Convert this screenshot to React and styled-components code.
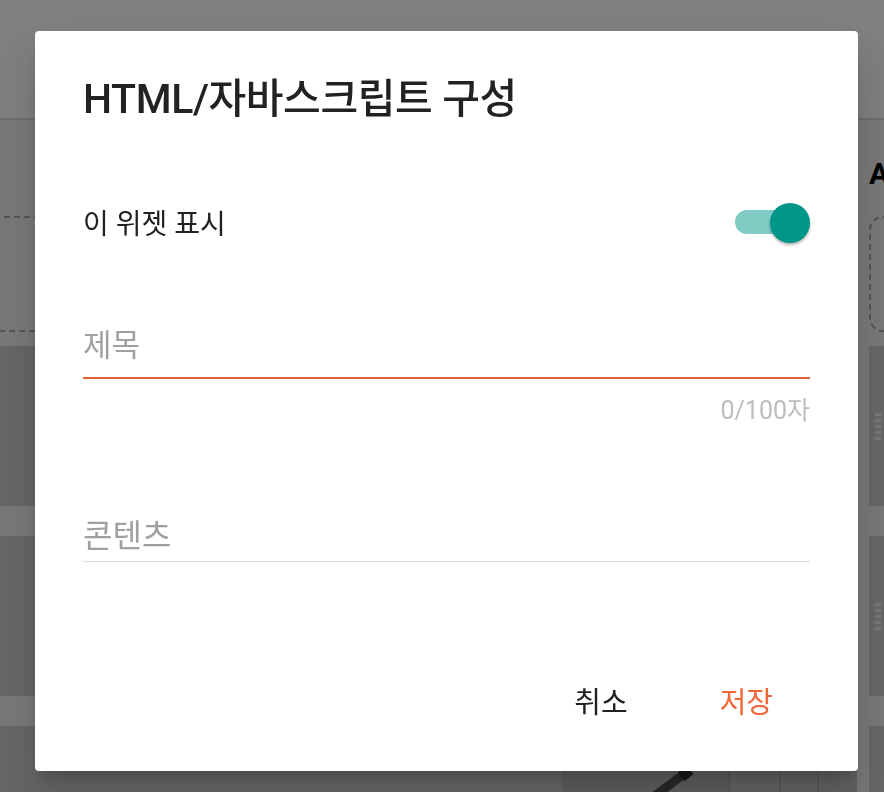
import React from 'react';
import styled, { createGlobalStyle } from 'styled-components';

const GlobalStyle = createGlobalStyle`
  html, body {
    margin: 0;
    padding: 0;
    height: 100%;
    overflow: hidden;
    background: #f0f0f0;
    font-family: Roboto, "Noto Sans CJK KR", sans-serif;
  }
`;

// page behind the dialog
const Page = styled.div`
  width: 884px;
  height: 792px;
  background: #f0f0f0;
  overflow: hidden;
`;

const Header = styled.header`
  height: 118px;
  background: #ffffff;
  border-bottom: 2px solid #d8d8d8;
`;

const Columns = styled.div`
  display: flex;
  gap: 12px;
  margin-left: -40px;
`;

const Column = styled.section`
  flex: 0 0 ${props => props.width}px;
  display: flex;
  flex-direction: column;
  gap: 30px;
  padding-top: 40px;
`;

const ColumnTitle = styled.h2`
  margin: 0 0 -2px;
  height: 28px;
  font-size: 30px;
  line-height: 28px;
  font-weight: 700;
  color: #000;
  white-space: nowrap;
`;

const DropZone = styled.div`
  height: 112px;
  border: 2px dashed #aaaaaa;
  border-radius: 14px;
  margin-bottom: -16px;
`;

const WidgetCard = styled.div`
  height: 160px;
  background: #cdcdcd;
  display: flex;
  align-items: ${props => (props.tools ? 'stretch' : 'center')};
  padding-left: 6px;
`;

const Grip = styled.div`
  display: flex;
  flex-direction: column;
  justify-content: center;
  gap: 3px;
  span {
    width: 6px;
    height: 3px;
    background: #ffffff;
    opacity: 0.7;
  }
`;

const ToolCells = styled.div`
  margin-left: auto;
  display: flex;
  align-items: stretch;
  background: #bcbcbc;
`;

const ToolCell = styled.div`
  width: ${props => props.w}px;
  border-left: 2px solid #b0b0b0;
  background: #c2c2c2;
`;

const Overlay = styled.div`
  position: fixed;
  inset: 0;
  background: rgba(0, 0, 0, 0.5);
  display: flex;
  align-items: flex-start;
  padding: 31px 0 0 35px;
`;

const Dialog = styled.div`
  width: 823px;
  height: 740px;
  box-sizing: border-box;
  background: #ffffff;
  border-radius: 4px;
  box-shadow: 0 11px 15px -7px rgba(0, 0, 0, 0.2), 0 24px 38px 3px rgba(0, 0, 0, 0.14);
  padding: 44px 48px 0;
  display: flex;
  flex-direction: column;
`;

const Title = styled.h1`
  margin: 0;
  font-size: 41px;
  line-height: 48px;
  font-weight: 500;
  color: #222222;
  letter-spacing: -0.4px;
`;

const ToggleRow = styled.div`
  margin-top: 74px;
  height: 50px;
  display: flex;
  align-items: center;
  justify-content: space-between;
`;

const Label = styled.span`
  font-size: 28px;
  color: #222222;
`;

const Switch = styled.div`
  position: relative;
  width: 66px;
  height: 24px;
  margin-right: 9px;
  border-radius: 12px;
  background: ${props => (props.on ? '#80cbc4' : '#bdbdbd')};
`;

const Thumb = styled.span`
  position: absolute;
  top: -7px;
  right: -9px;
  width: 40px;
  height: 40px;
  border-radius: 50%;
  background: #009688;
  box-shadow: 0 2px 3px rgba(0, 0, 0, 0.3);
`;

const Field = styled.div`
  margin-top: ${props => props.top}px;
  padding-bottom: ${props => props.pad}px;
  display: flex;
  align-items: flex-end;
  border-bottom: ${props => (props.focused ? '2px solid #e0622f' : '1px solid #dcdcdc')};
`;

const Placeholder = styled.span`
  font-size: ${props => props.size}px;
  line-height: 40px;
  color: #a0a0a0;
`;

const Counter = styled.div`
  margin-top: 18px;
  text-align: right;
  font-size: 25px;
  line-height: 28px;
  color: #bdbdbd;
`;

const Actions = styled.div`
  margin-top: auto;
  height: 100px;
  display: flex;
  justify-content: flex-end;
  align-items: flex-start;
  gap: 92px;
  padding-right: 37px;
  box-sizing: border-box;
`;

const TextButton = styled.button`
  border: none;
  background: none;
  padding: 0;
  margin-top: 12px;
  font-family: inherit;
  font-size: 29px;
  line-height: 40px;
  color: ${props => (props.primary ? '#f0683a' : '#222222')};
`;

function Card({ tools }) {
  return (
    <WidgetCard tools={tools}>
      <Grip>
        {[0, 1, 2, 3, 4].map(i => <span key={i} />)}
      </Grip>
      {tools && (
        <ToolCells>
          <svg width="166" height="160" viewBox="0 0 166 160">
            <path d="M90 72 L122 48" stroke="#505050" strokeWidth="9" />
            <path d="M119 51 L128 44" stroke="#2e2e2e" strokeWidth="11" />
          </svg>
          <ToolCell w={49} />
          <ToolCell w={36} />
          <ToolCell w={38} />
        </ToolCells>
      )}
    </WidgetCard>
  );
}

export default function App() {
  return (
    <>
      <GlobalStyle />
      <Page>
        <Header />
        <Columns>
          <Column width={897}>
            <ColumnTitle>&nbsp;</ColumnTitle>
            <DropZone />
            <Card />
            <Card />
            <Card tools />
          </Column>
          <Column width={400}>
            <ColumnTitle>A</ColumnTitle>
            <DropZone />
            <Card />
            <Card />
            <Card />
          </Column>
        </Columns>
      </Page>
      <Overlay>
        <Dialog>
          <Title>HTML/자바스크립트 구성</Title>
          <ToggleRow>
            <Label>이 위젯 표시</Label>
            <Switch on>
              <Thumb />
            </Switch>
          </ToggleRow>
          <Field top={79} pad={11} focused>
            <Placeholder size={31}>제목</Placeholder>
          </Field>
          <Counter>0/100자</Counter>
          <Field top={91} pad={5}>
            <Placeholder size={32}>콘텐츠</Placeholder>
          </Field>
          <Actions>
            <TextButton>취소</TextButton>
            <TextButton primary>저장</TextButton>
          </Actions>
        </Dialog>
      </Overlay>
    </>
  );
}
